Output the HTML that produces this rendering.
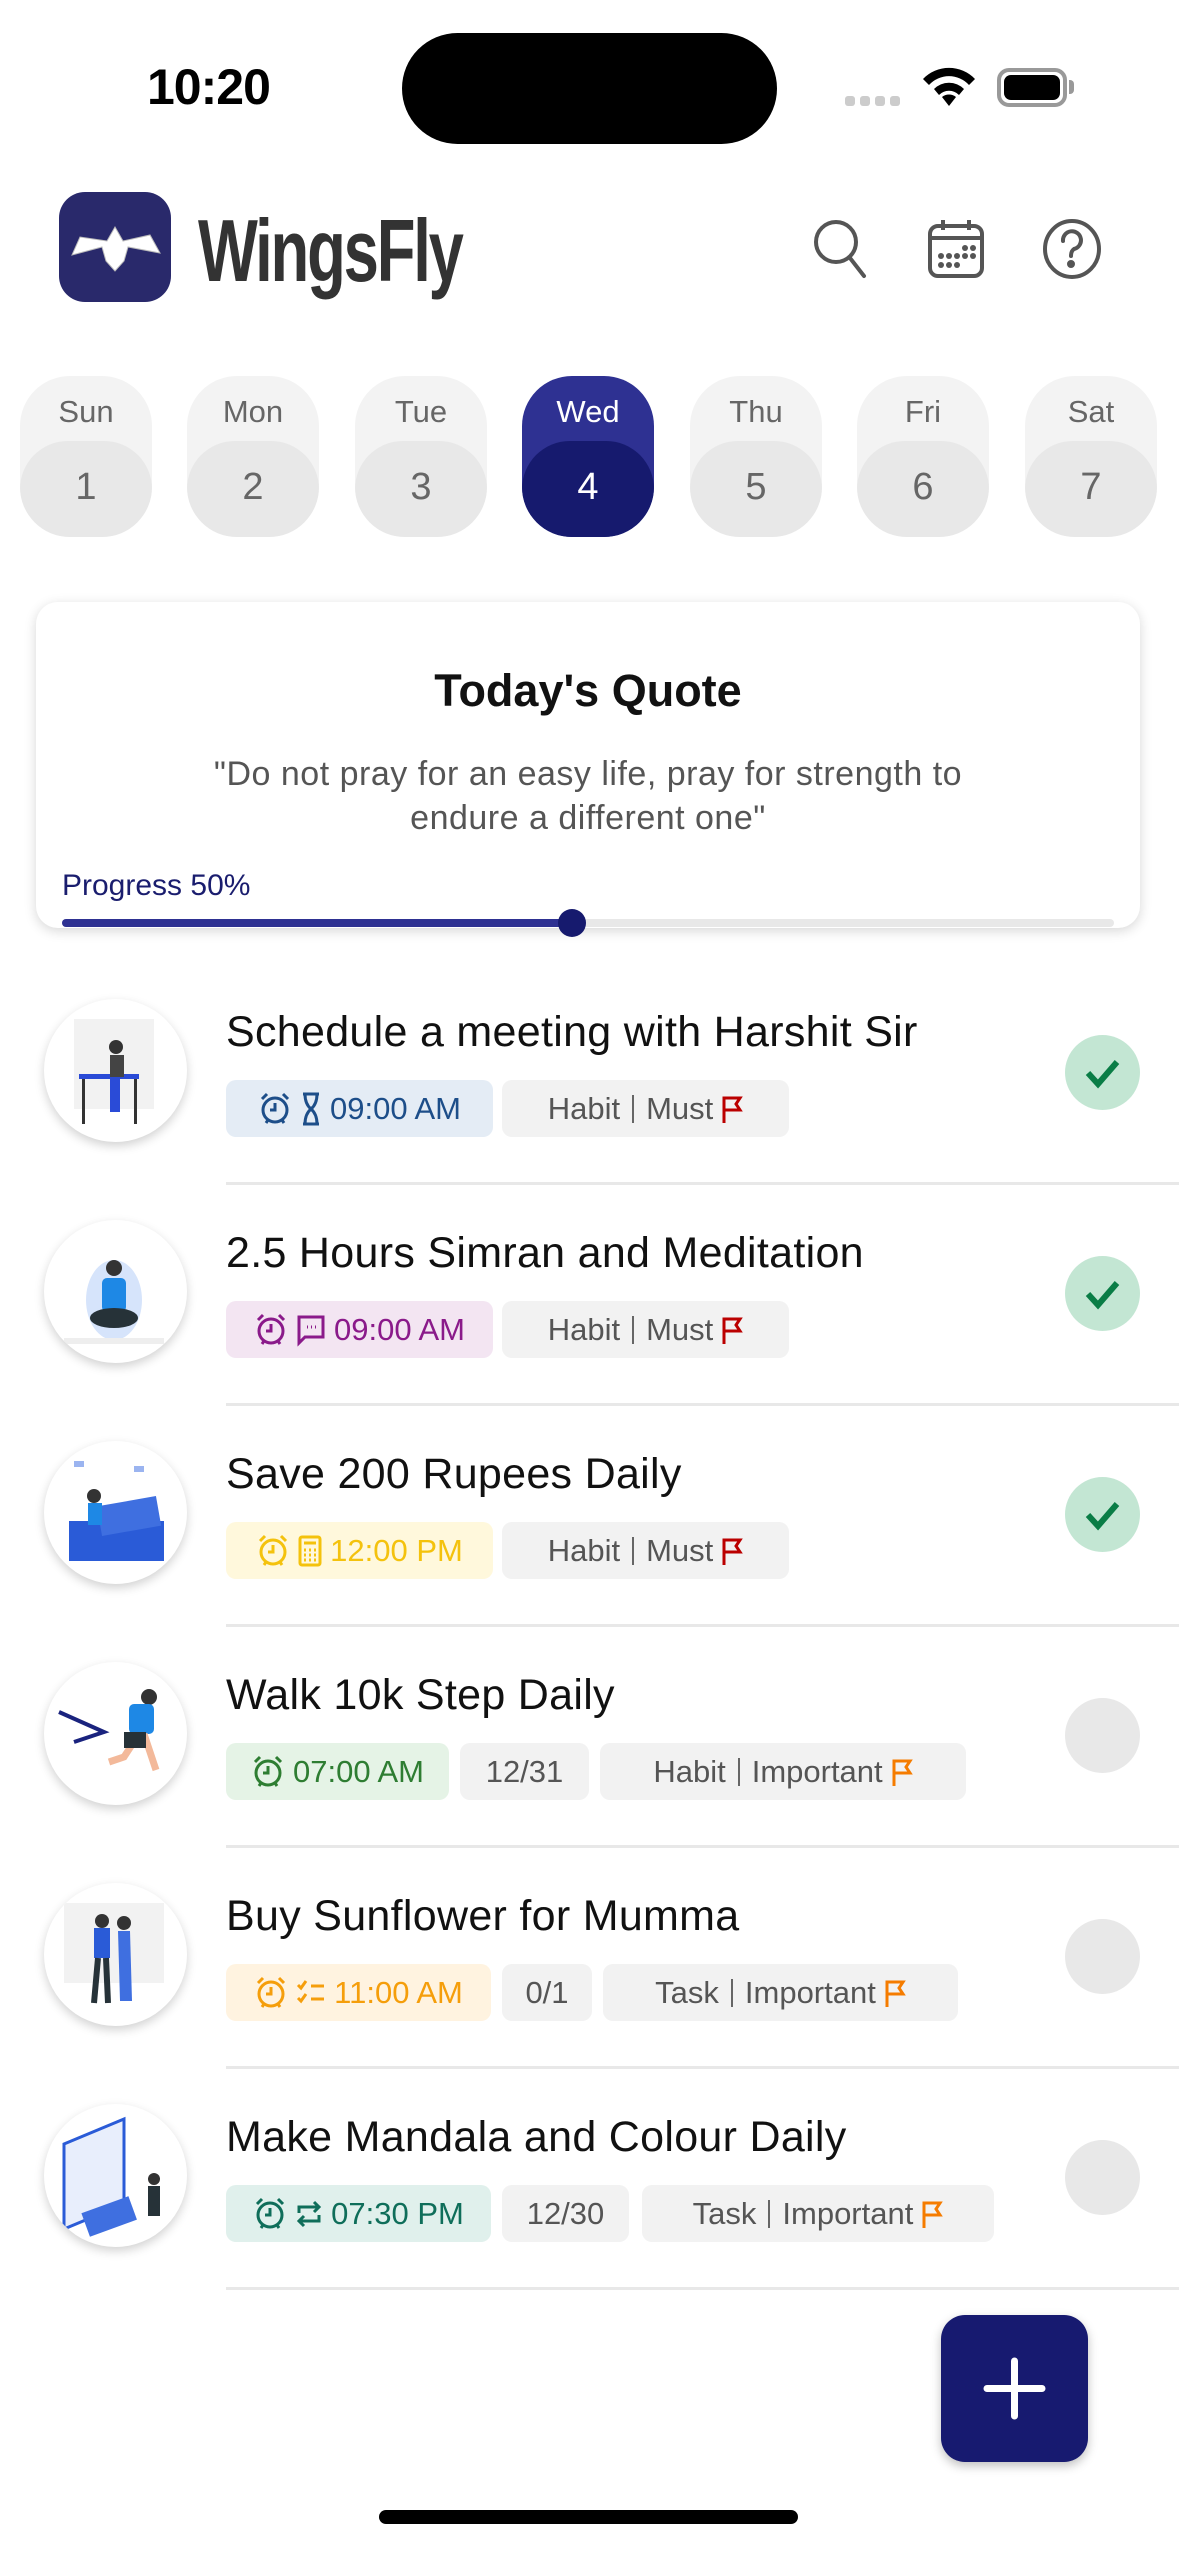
<!DOCTYPE html>
<html><head><meta charset="utf-8"><style>
*{margin:0;padding:0;box-sizing:border-box}
body{width:1179px;height:2556px;background:#fff;position:relative;overflow:hidden;font-family:"Liberation Sans",sans-serif}
.a{position:absolute}
.pill{position:absolute;top:376px;width:132px;height:161px;border-radius:50px;background:#f3f3f3;overflow:hidden}
.pill .l{position:absolute;top:18px;width:100%;text-align:center;font-size:31px;color:#666}
.pill .b{position:absolute;top:65px;left:0;width:100%;height:96px;border-radius:48px;background:#e8e8e8;text-align:center;line-height:92px;font-size:38px;color:#666}
.title{position:absolute;left:226px;font-size:43px;color:#111;white-space:nowrap;letter-spacing:.3px}
.chip{position:absolute;height:57px;border-radius:10px;font-size:31px;display:flex;align-items:center;justify-content:center;gap:8px;white-space:nowrap}
.g{background:#f2f2f2;color:#555}
.av{position:absolute;left:44px;width:143px;height:143px;border-radius:50%;background:#fff;box-shadow:0 4px 10px rgba(0,0,0,.18);overflow:hidden}
.ck{position:absolute;left:1065px;width:75px;height:75px;border-radius:50%;background:#e8e8e8}
.ck.d{background:#c3e6d3}
.div{position:absolute;left:226px;right:0;height:3px;background:#e8e8e8}
.sep{display:inline-block;width:2px;height:28px;background:#666;margin:0 4px}
</style></head><body>
<div class="a" style="left:147px;top:58px;font-size:50px;font-weight:bold;color:#000;letter-spacing:-1px">10:20</div>
<div class="a" style="left:402px;top:33px;width:375px;height:111px;border-radius:56px;background:#000"></div>
<div class="a" style="left:845px;top:96px;width:60px;height:10px;display:flex;gap:5px"><i style="width:10px;height:10px;border-radius:3px;background:#ccc"></i><i style="width:10px;height:10px;border-radius:3px;background:#ccc"></i><i style="width:10px;height:10px;border-radius:3px;background:#ccc"></i><i style="width:10px;height:10px;border-radius:3px;background:#ccc"></i></div>
<svg class="a" style="left:920px;top:66px" width="58" height="42" viewBox="0 0 58 42"><path d="M29 40 L22 31 A11 11 0 0 1 36 31 Z" fill="#000"/><path d="M14 23 A21 21 0 0 1 44 23 L39 29 A14 14 0 0 0 19 29 Z" fill="#000"/><path d="M3 13 A36 36 0 0 1 55 13 L49 19 A27 27 0 0 0 9 19 Z" fill="#000"/></svg>
<div class="a" style="left:997px;top:68px;width:70px;height:39px;border:4px solid #999;border-radius:12px;padding:3px"><div style="width:100%;height:100%;background:#000;border-radius:7px"></div></div>
<div class="a" style="left:1069px;top:80px;width:5px;height:14px;background:#999;border-radius:0 4px 4px 0"></div>

<div class="a" style="left:59px;top:192px;width:112px;height:110px;border-radius:26px;background:#29296b"></div>
<svg class="a" style="left:68px;top:225px" width="95" height="50" viewBox="0 0 95 50"><path d="M47 2 L55 16 L82 10 L92 28 L60 22 L56 36 L47 46 L38 36 L34 22 L4 30 L12 12 L39 16 Z" fill="#fff" stroke="#bbb" stroke-width="1"/></svg>
<div class="a" style="left:198px;top:200px;font-family:'Liberation Sans Narrow','Liberation Sans',sans-serif;font-size:88px;font-weight:bold;color:#333;letter-spacing:-3px;transform:scaleX(.72);transform-origin:left">WingsFly</div>
<svg class="a" style="left:812px;top:218px" width="58" height="62" viewBox="0 0 58 62" fill="none" stroke="#555" stroke-width="4"><circle cx="24" cy="24" r="20"/><path d="M38 40 L52 58" stroke-linecap="round"/></svg>
<svg class="a" style="left:927px;top:218px" width="58" height="62" viewBox="0 0 58 62" fill="none" stroke="#555" stroke-width="4"><rect x="3" y="8" width="52" height="50" rx="8"/><path d="M3 20 H55 M16 2 V12 M42 2 V12"/><g fill="#555" stroke="none"><circle cx="38" cy="30" r="3"/><circle cx="46" cy="30" r="3"/><circle cx="14" cy="38" r="3"/><circle cx="22" cy="38" r="3"/><circle cx="30" cy="38" r="3"/><circle cx="38" cy="38" r="3"/><circle cx="46" cy="38" r="3"/><circle cx="14" cy="47" r="3"/><circle cx="22" cy="47" r="3"/><circle cx="30" cy="47" r="3"/></g></svg>
<svg class="a" style="left:1042px;top:218px" width="60" height="62" viewBox="0 0 60 62" fill="none" stroke="#555" stroke-width="4"><ellipse cx="30" cy="31" rx="27" ry="28"/><path d="M21 23 A9 9 0 1 1 32 31 Q29 33 29 38" stroke-linecap="round"/><circle cx="29" cy="46" r="2" fill="#555"/></svg>

<div class="pill" style="left:20px"><div class="l">Sun</div><div class="b">1</div></div>
<div class="pill" style="left:187px"><div class="l">Mon</div><div class="b">2</div></div>
<div class="pill" style="left:355px"><div class="l">Tue</div><div class="b">3</div></div>
<div class="pill" style="left:522px;background:#2e3192"><div class="l" style="color:#fff">Wed</div><div class="b" style="background:#161a6e;color:#fff">4</div></div>
<div class="pill" style="left:690px"><div class="l">Thu</div><div class="b">5</div></div>
<div class="pill" style="left:857px"><div class="l">Fri</div><div class="b">6</div></div>
<div class="pill" style="left:1025px"><div class="l">Sat</div><div class="b">7</div></div>

<div class="a" style="left:36px;top:602px;width:1104px;height:326px;border-radius:22px;background:#fff;box-shadow:0 3px 12px rgba(0,0,0,.16)"></div>
<div class="a" style="left:36px;top:665px;width:1104px;text-align:center;font-size:45px;font-weight:bold;color:#111">Today's Quote</div>
<div class="a" style="left:36px;top:752px;width:1104px;text-align:center;font-size:34px;line-height:44px;color:#555;letter-spacing:.5px">"Do not pray for an easy life, pray for strength to<br>endure a different one"</div>
<div class="a" style="left:62px;top:869px;font-size:30px;color:#1a1d6e">Progress 50%</div>
<div class="a" style="left:62px;top:919px;width:1052px;height:8px;background:#e8e8e8;border-radius:4px"></div>
<div class="a" style="left:62px;top:919px;width:510px;height:8px;background:#2e3192;border-radius:4px"></div>
<div class="a" style="left:558px;top:909px;width:28px;height:28px;border-radius:50%;background:#161a6e"></div>

<div class="av" style="top:999px"><svg width="143" height="143"><rect x="30" y="20" width="80" height="90" fill="#f2f2f2"/><rect x="35" y="75" width="60" height="5" fill="#2a4bd7"/><rect x="38" y="80" width="3" height="45" fill="#333"/><rect x="90" y="80" width="3" height="45" fill="#333"/><circle cx="72" cy="48" r="7" fill="#333"/><rect x="66" y="56" width="14" height="22" fill="#444"/><rect x="66" y="78" width="10" height="35" fill="#2a4bd7"/></svg></div>
<div class="title" style="top:1008px">Schedule a meeting with Harshit Sir</div>
<div class="chip" style="left:226px;top:1080px;width:267px;background:#e4ecf5;color:#1d4e89"><svg width="34" height="34" viewBox="0 0 34 34" fill="none" stroke="#1d4e89" stroke-width="3"><circle cx="17" cy="18" r="12"/><path d="M17 11 V18 H12 M4 7 L9 2 M30 7 L25 2 M8 31 L10 28 M26 31 L24 28"/></svg><svg width="22" height="34" viewBox="0 0 22 34" fill="none" stroke="#1d4e89" stroke-width="3"><path d="M3 2 H19 M3 32 H19 M5 2 Q5 12 11 17 Q5 22 5 32 M17 2 Q17 12 11 17 Q17 22 17 32"/></svg>09:00 AM</div>
<div class="chip g" style="left:502px;top:1080px;width:287px">Habit<span class="sep"></span>Must <svg width="22" height="28" viewBox="0 0 22 28" fill="none" stroke="#b00" stroke-width="3"><path d="M3 28 V3 H19 L15 9 L19 15 H3"/></svg></div>
<div class="ck d" style="top:1035px"><svg width="75" height="75" viewBox="0 0 75 75"><path d="M23 38 L33 49 L52 27" fill="none" stroke="#0a7d46" stroke-width="6"/></svg></div>
<div class="div" style="top:1182px"></div>

<div class="av" style="top:1220px"><svg width="143" height="143"><ellipse cx="70" cy="80" rx="28" ry="40" fill="#d6e4fb"/><circle cx="70" cy="48" r="8" fill="#333"/><rect x="58" y="58" width="24" height="34" rx="5" fill="#1e88e5"/><ellipse cx="70" cy="98" rx="24" ry="10" fill="#263238"/><rect x="20" y="118" width="100" height="6" fill="#eee"/></svg></div>
<div class="title" style="top:1229px">2.5 Hours Simran and Meditation</div>
<div class="chip" style="left:226px;top:1301px;width:267px;background:#f3e5f2;color:#8a1a8a"><svg width="34" height="34" viewBox="0 0 34 34" fill="none" stroke="#8a1a8a" stroke-width="3"><circle cx="17" cy="18" r="12"/><path d="M17 11 V18 H12 M4 7 L9 2 M30 7 L25 2 M8 31 L10 28 M26 31 L24 28"/></svg><svg width="30" height="34" viewBox="0 0 30 34" fill="none" stroke="#8a1a8a" stroke-width="3"><path d="M3 4 H27 V24 H9 L3 30 Z"/><path d="M11 14 H12 M15 14 H16 M19 14 H20"/></svg>09:00 AM</div>
<div class="chip g" style="left:502px;top:1301px;width:287px">Habit<span class="sep"></span>Must <svg width="22" height="28" viewBox="0 0 22 28" fill="none" stroke="#b00" stroke-width="3"><path d="M3 28 V3 H19 L15 9 L19 15 H3"/></svg></div>
<div class="ck d" style="top:1256px"><svg width="75" height="75" viewBox="0 0 75 75"><path d="M23 38 L33 49 L52 27" fill="none" stroke="#0a7d46" stroke-width="6"/></svg></div>
<div class="div" style="top:1403px"></div>

<div class="av" style="top:1441px"><svg width="143" height="143"><rect x="25" y="80" width="95" height="40" fill="#2a5bd7"/><rect x="55" y="60" width="60" height="30" fill="#3f6fe0" transform="rotate(-10 85 75)"/><circle cx="50" cy="55" r="7" fill="#333"/><rect x="44" y="62" width="14" height="22" fill="#1e88e5"/><rect x="30" y="20" width="10" height="6" fill="#9bb4f0"/><rect x="90" y="25" width="10" height="6" fill="#9bb4f0"/></svg></div>
<div class="title" style="top:1450px">Save 200 Rupees Daily</div>
<div class="chip" style="left:226px;top:1522px;width:267px;background:#fff8dc;color:#f4c20d"><svg width="34" height="34" viewBox="0 0 34 34" fill="none" stroke="#f4c20d" stroke-width="3"><circle cx="17" cy="18" r="12"/><path d="M17 11 V18 H12 M4 7 L9 2 M30 7 L25 2 M8 31 L10 28 M26 31 L24 28"/></svg><svg width="24" height="34" viewBox="0 0 24 34" fill="none" stroke="#f4c20d" stroke-width="3"><rect x="2" y="3" width="20" height="28" rx="2"/><path d="M6 9 H18 M6 16 H8 M11 16 H13 M16 16 H18 M6 21 H8 M11 21 H13 M16 21 H18 M6 26 H8 M11 26 H13 M16 26 H18"/></svg>12:00 PM</div>
<div class="chip g" style="left:502px;top:1522px;width:287px">Habit<span class="sep"></span>Must <svg width="22" height="28" viewBox="0 0 22 28" fill="none" stroke="#b00" stroke-width="3"><path d="M3 28 V3 H19 L15 9 L19 15 H3"/></svg></div>
<div class="ck d" style="top:1477px"><svg width="75" height="75" viewBox="0 0 75 75"><path d="M23 38 L33 49 L52 27" fill="none" stroke="#0a7d46" stroke-width="6"/></svg></div>
<div class="div" style="top:1624px"></div>

<div class="av" style="top:1662px"><svg width="143" height="143"><path d="M15 50 L60 70 L30 80" fill="none" stroke="#1a237e" stroke-width="4"/><circle cx="105" cy="35" r="8" fill="#333"/><rect x="85" y="42" width="25" height="30" rx="5" fill="#1e88e5"/><path d="M95 72 L80 95 L65 100 M100 72 L112 108" stroke="#f3b99a" stroke-width="7" fill="none"/><rect x="80" y="70" width="22" height="16" fill="#263238"/></svg></div>
<div class="title" style="top:1671px">Walk 10k Step Daily</div>
<div class="chip" style="left:226px;top:1743px;width:223px;background:#e5f3e6;color:#2e7d32"><svg width="34" height="34" viewBox="0 0 34 34" fill="none" stroke="#2e7d32" stroke-width="3"><circle cx="17" cy="18" r="12"/><path d="M17 11 V18 H12 M4 7 L9 2 M30 7 L25 2 M8 31 L10 28 M26 31 L24 28"/></svg>07:00 AM</div>
<div class="chip g" style="left:460px;top:1743px;width:129px">12/31</div>
<div class="chip g" style="left:600px;top:1743px;width:366px">Habit<span class="sep"></span>Important <svg width="22" height="28" viewBox="0 0 22 28" fill="none" stroke="#f57c00" stroke-width="3"><path d="M3 28 V3 H19 L15 9 L19 15 H3"/></svg></div>
<div class="ck" style="top:1698px"></div>
<div class="div" style="top:1845px"></div>

<div class="av" style="top:1883px"><svg width="143" height="143"><rect x="20" y="20" width="100" height="80" fill="#f2f2f2"/><circle cx="58" cy="38" r="7" fill="#333"/><rect x="50" y="45" width="16" height="30" fill="#2a5bd7"/><path d="M54 75 L50 120 M62 75 L64 120" stroke="#263238" stroke-width="6"/><circle cx="80" cy="40" r="7" fill="#333"/><path d="M74 48 L86 48 L88 118 L76 118 Z" fill="#3f6fe0"/></svg></div>
<div class="title" style="top:1892px">Buy Sunflower for Mumma</div>
<div class="chip" style="left:226px;top:1964px;width:265px;background:#fff3e0;color:#f59e0b"><svg width="34" height="34" viewBox="0 0 34 34" fill="none" stroke="#f59e0b" stroke-width="3"><circle cx="17" cy="18" r="12"/><path d="M17 11 V18 H12 M4 7 L9 2 M30 7 L25 2 M8 31 L10 28 M26 31 L24 28"/></svg><svg width="30" height="34" viewBox="0 0 30 34" fill="none" stroke="#f59e0b" stroke-width="3"><path d="M2 9 L5 12 L10 5 M2 22 L5 25 L10 18 M15 10 H28 M15 23 H28"/></svg>11:00 AM</div>
<div class="chip g" style="left:502px;top:1964px;width:90px">0/1</div>
<div class="chip g" style="left:603px;top:1964px;width:355px">Task<span class="sep"></span>Important <svg width="22" height="28" viewBox="0 0 22 28" fill="none" stroke="#f57c00" stroke-width="3"><path d="M3 28 V3 H19 L15 9 L19 15 H3"/></svg></div>
<div class="ck" style="top:1919px"></div>
<div class="div" style="top:2066px"></div>

<div class="av" style="top:2104px"><svg width="143" height="143"><path d="M20 40 L80 15 L80 100 L20 125 Z" fill="#e8eefc" stroke="#2a5bd7" stroke-width="3"/><rect x="40" y="100" width="50" height="25" fill="#3f6fe0" transform="rotate(-20 65 112)"/><circle cx="110" cy="75" r="6" fill="#333"/><rect x="104" y="82" width="12" height="30" fill="#263238"/></svg></div>
<div class="title" style="top:2113px">Make Mandala and Colour Daily</div>
<div class="chip" style="left:226px;top:2185px;width:265px;background:#e0f0ec;color:#0f6e5a"><svg width="34" height="34" viewBox="0 0 34 34" fill="none" stroke="#0f6e5a" stroke-width="3"><circle cx="17" cy="18" r="12"/><path d="M17 11 V18 H12 M4 7 L9 2 M30 7 L25 2 M8 31 L10 28 M26 31 L24 28"/></svg><svg width="28" height="34" viewBox="0 0 28 34" fill="none" stroke="#0f6e5a" stroke-width="3"><path d="M4 16 V10 H24 M19 5 L24 10 L19 15 M24 18 V24 H4 M9 19 L4 24 L9 29"/></svg>07:30 PM</div>
<div class="chip g" style="left:502px;top:2185px;width:127px">12/30</div>
<div class="chip g" style="left:642px;top:2185px;width:352px">Task<span class="sep"></span>Important <svg width="22" height="28" viewBox="0 0 22 28" fill="none" stroke="#f57c00" stroke-width="3"><path d="M3 28 V3 H19 L15 9 L19 15 H3"/></svg></div>
<div class="ck" style="top:2140px"></div>
<div class="div" style="top:2287px"></div>

<div class="a" style="left:941px;top:2315px;width:147px;height:147px;border-radius:24px;background:#171a70;box-shadow:0 4px 10px rgba(0,0,0,.25)"><svg width="147" height="147"><path d="M73.5 46 V101 M46 73.5 H101" stroke="#fff" stroke-width="7" stroke-linecap="round"/></svg></div>
<div class="a" style="left:379px;top:2510px;width:419px;height:14px;border-radius:7px;background:#000"></div>
</body></html>
